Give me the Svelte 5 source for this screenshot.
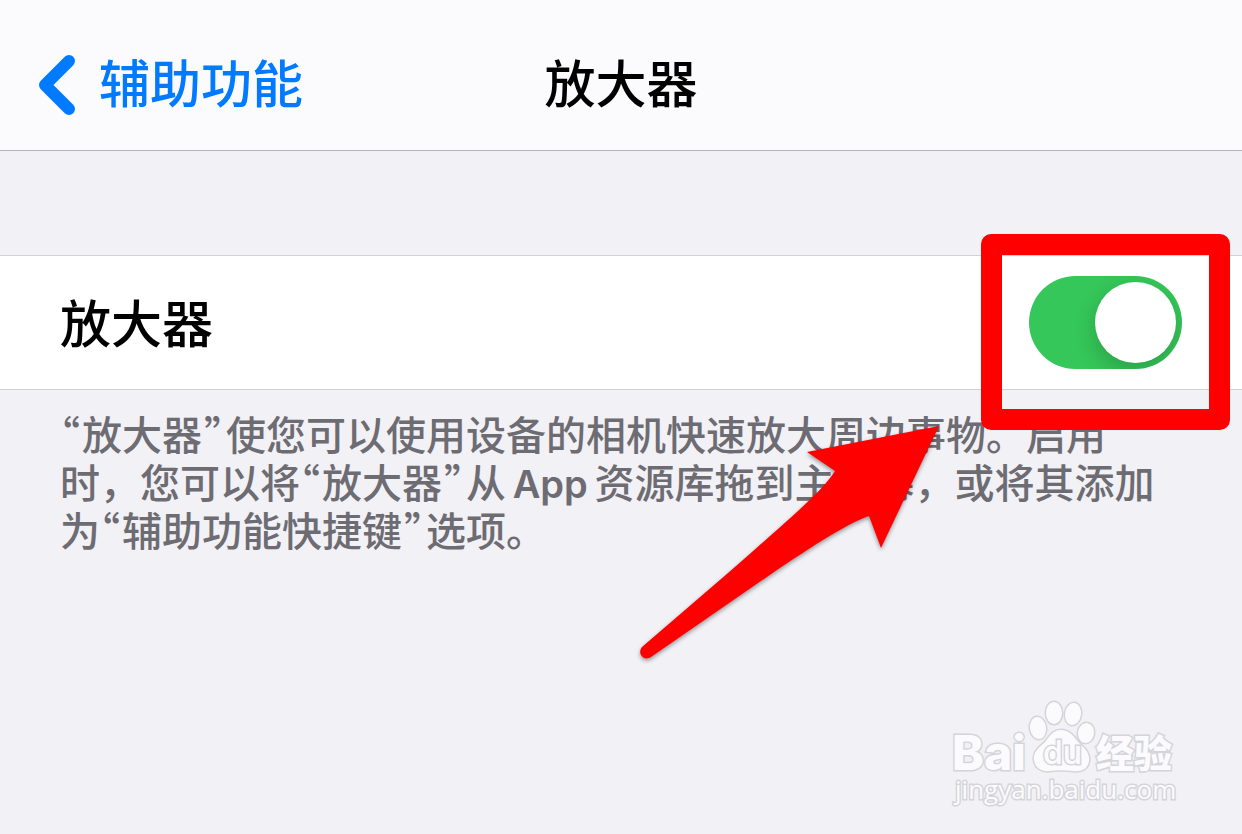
<script lang="ts">
	let enabled = $state(true);
</script>

{#snippet quoted(text: string)}
	<span class="quote open">“</span>{text}<span class="quote close">”</span>
{/snippet}

<div class="screen" lang="zh-CN">
	<header class="navbar">
		<button class="back" type="button">
			<svg class="chevron" viewBox="0 0 36 60" aria-hidden="true">
				<path d="M30 6 6 30 30 54" />
			</svg>
			<span>辅助功能</span>
		</button>
		<h1 class="title">放大器</h1>
	</header>

	<main class="content">
		<div class="row">
			<label for="magnifier">放大器</label>
			<input id="magnifier" class="switch" type="checkbox" role="switch" bind:checked={enabled} />
			<div class="highlight" aria-hidden="true"></div>
		</div>
		<p class="note">
			{@render quoted('放大器')}使您可以使用设备的相机快速放大周边事物。启用时，您可以将{@render quoted('放大器')}从 <span class="latin">App</span> 资源库拖到主屏幕，或将其添加为{@render quoted('辅助功能快捷键')}选项。
		</p>
	</main>

	<svg class="arrow" viewBox="0 0 304 240" aria-hidden="true">
		<path
			d="M301 6 169 32 197 51C185 71 150 100 90 153L4 227C-1 233 5 242 13 237L136 152C163 134 207 104 231 96L243 128Z"
		/>
	</svg>

	<svg class="watermark" viewBox="0 0 230 110" role="img" aria-label="Baidu 经验">
		<text class="brand" x="0" y="70">Bai</text>
		<ellipse cx="86" cy="28" rx="8" ry="11" transform="rotate(-8 86 28)" />
		<ellipse cx="102" cy="13" rx="8" ry="11" />
		<ellipse cx="121" cy="14" rx="8" ry="11" transform="rotate(8 121 14)" />
		<ellipse cx="134" cy="33" rx="8" ry="10" transform="rotate(10 134 33)" />
		<path
			d="M109 30c-8 0-11 6-16 12-5 5-12 9-11 18 1 8 8 12 15 11 8-1 16-1 24 0 8 1 15-2 16-10 1-9-5-13-10-18-5-6-9-13-18-13Z"
		/>
		<text class="du" x="91" y="64">du</text>
		<text class="cn" x="144" y="67">经验</text>
		<text class="url" x="3" y="99">jingyan.baidu.com</text>
	</svg>
</div>

<style>
	:global(body) {
		margin: 0;
		background: #f2f1f6;
	}

	.screen {
		position: relative;
		min-height: 100vh;
		overflow: hidden;
		background: #f2f1f6;
		color: #000;
		font-family: Inter, 'Noto Sans CJK SC', sans-serif;
		font-size: 51px;
		font-weight: 500;
		line-height: 60px;
	}

	.navbar {
		display: grid;
		grid-template-columns: 1fr auto 1fr;
		align-items: center;
		padding: 55px 39px 35px;
		border-bottom: 1px solid #b4b4b8;
		background: #fbfbfd;
	}

	.back {
		display: flex;
		align-items: center;
		gap: 24px;
		justify-self: start;
		padding: 0;
		border: 0;
		background: none;
		color: #007aff;
		font: inherit;
	}

	.chevron {
		width: 36px;
		height: 60px;
		fill: none;
		stroke: currentColor;
		stroke-width: 12;
		stroke-linecap: round;
		stroke-linejoin: round;
	}

	.title {
		margin: 0;
		font: inherit;
	}

	.content {
		padding-top: 104px;
	}

	.row {
		position: relative;
		display: flex;
		align-items: center;
		justify-content: space-between;
		padding: 20px 60px;
		border: solid #d2d1d6;
		border-width: 1px 0;
		background: #fff;
	}

	.row label {
		padding-top: 4px;
	}

	.switch {
		appearance: none;
		width: 153px;
		height: 93px;
		margin: 0;
		padding: 6px;
		box-sizing: border-box;
		overflow: hidden;
		border-radius: 47px;
		background: #e9e9eb;
	}

	.switch::before {
		content: '';
		display: block;
		width: 81px;
		height: 81px;
		border-radius: 50%;
		background: #fff;
		box-shadow: 0 8px 22px rgb(0 0 0 / 20%);
	}

	.switch:checked {
		background: #35c759;
	}

	.switch:checked::before {
		margin-left: auto;
	}

	.highlight {
		position: absolute;
		top: -22px;
		right: 12px;
		width: 207px;
		height: 154px;
		border: 21px solid #f00;
		border-radius: 10px;
		pointer-events: none;
	}

	.note {
		margin: 0;
		padding: 22px 60px;
		color: #6d6c72;
		font-size: 40px;
		line-height: 48px;
	}

	/* half-width curly quotes from the CJK face */
	.quote {
		margin: 0 2px;
		font-family: 'Noto Sans CJK SC', sans-serif;
		font-feature-settings: 'halt';
		line-height: 1;
	}

	.quote.open {
		margin-left: 0;
	}

	.latin {
		margin: 0 -4px;
		font-size: 38px;
		font-weight: 600;
		line-height: 1;
	}

	.arrow {
		position: absolute;
		top: 420px;
		right: 300px;
		width: 304px;
		height: 240px;
		overflow: visible;
		fill: #f00;
		filter: drop-shadow(0 2px 2px rgb(0 0 0 / 40%));
		pointer-events: none;
	}

	.watermark {
		position: absolute;
		right: 60px;
		bottom: 24px;
		width: 230px;
		height: 110px;
		overflow: visible;
		fill: #fbfbfd;
		stroke: #d5d4d9;
		stroke-width: 3;
		paint-order: stroke;
	}

	.brand {
		font: 800 48px Inter, sans-serif;
	}

	.du {
		font: 500 32px Inter, sans-serif;
	}

	.cn {
		font: 900 38px 'Noto Sans CJK SC', sans-serif;
	}

	.url {
		font: 400 26px 'Open Sans', sans-serif;
	}
</style>
